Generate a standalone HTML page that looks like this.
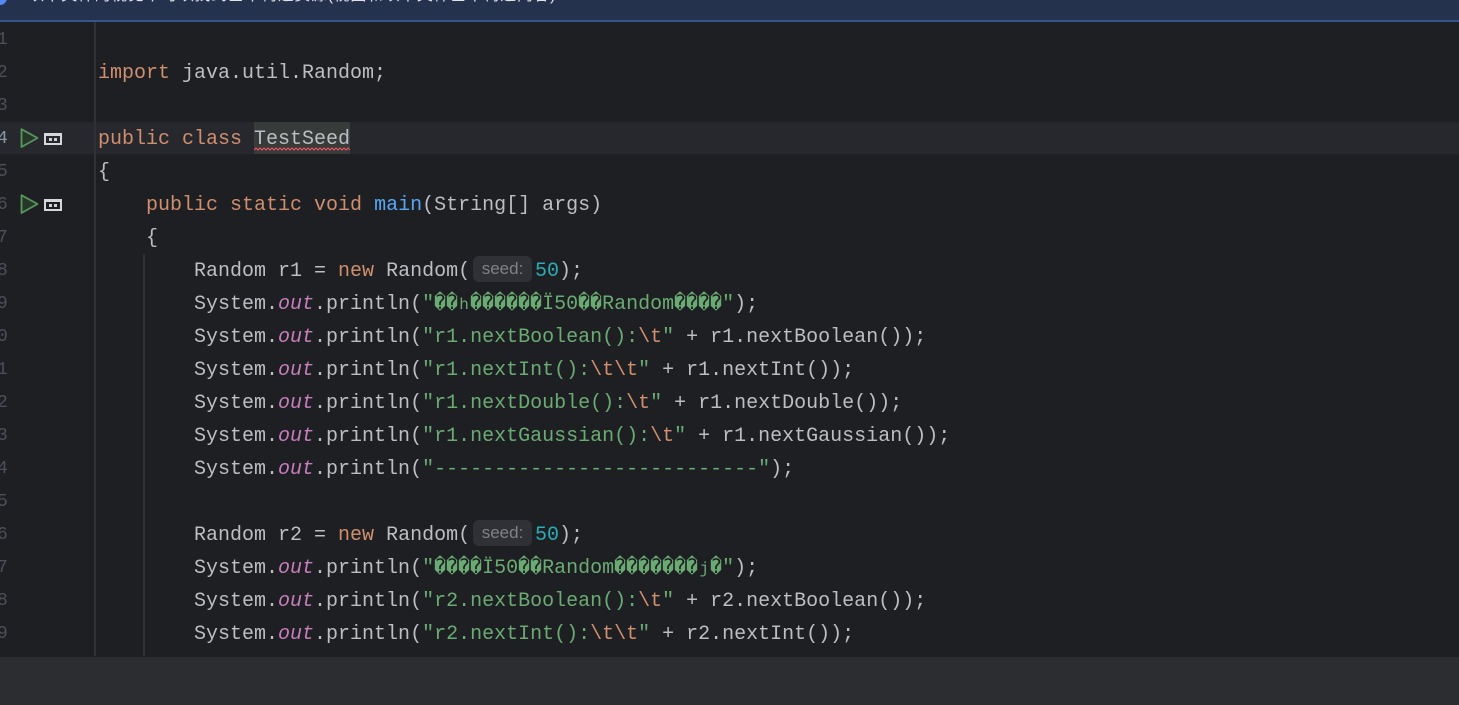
<!DOCTYPE html>
<html><head><meta charset="utf-8">
<style>
html,body{margin:0;padding:0;background:#1e1f22;}
#p{position:relative;width:1459px;height:705px;overflow:hidden;background:#1e1f22;font-family:"Liberation Mono",monospace;font-size:20px;color:#bcbec4;}
.l{position:absolute;left:98px;height:33px;line-height:33px;white-space:pre;letter-spacing:0;margin-top:1px;}
.n{position:absolute;left:-3px;width:12px;height:33px;line-height:33px;font-size:18px;color:#4b5059;margin-top:1px;}
.k{color:#cf8e6d}.s{color:#6aab73}.o{color:#c77dbb;font-style:italic}.m{color:#56a8f5}.c{color:#2aacb8}
.d{display:inline-block;width:12px;line-height:16px;text-align:center;color:#6aab73;font-family:"DejaVu Sans Mono",monospace;}
.t{font-size:16px;line-height:16px;display:inline-block;width:12px;text-align:center}
.h{position:absolute;height:26px;line-height:26px;width:59px;background:#2f3136;border-radius:6px;color:#7f8288;font-family:"Liberation Sans",sans-serif;font-size:17px;text-align:center;left:473px;}
</style></head><body><div id="p">
<div style="position:absolute;left:0;top:0;width:1459px;height:20px;background:#25324d;overflow:hidden">
<div style="position:absolute;left:-7px;top:-9px;width:14px;height:14px;border-radius:50%;background:#548af7"></div>
<div style="position:absolute;left:28px;top:-14px;font:16px/20px 'Liberation Sans','Noto Sans CJK SC',sans-serif;letter-spacing:.65px;color:#dfe1e5;white-space:pre">以下文件的视觉不可以找到基本构造资源(视图和以下文件基本构造内容)</div>
</div>
<div style="position:absolute;left:0;top:20px;width:1459px;height:2px;background:#35538f"></div>
<div style="position:absolute;left:0;top:122px;width:1459px;height:32px;background:#26282e"></div>
<div style="position:absolute;left:254px;top:122px;width:96px;height:32px;background:#373b39"></div>
<div style="position:absolute;left:94px;top:22px;width:2px;height:634px;background:#2f3135"></div>
<div style="position:absolute;left:143px;top:254px;width:2px;height:402px;background:#2f3135"></div>
<div style="position:absolute;left:0;top:657px;width:1459px;height:48px;background:#2b2d30"></div>

<div class="n" style="top:23px">1</div><div class="n" style="top:56px">2</div><div class="n" style="top:89px">3</div><div class="n" style="top:122px;color:#8b94a3">4</div><div class="n" style="top:155px">5</div><div class="n" style="top:188px">6</div><div class="n" style="top:221px">7</div><div class="n" style="top:254px">8</div><div class="n" style="top:287px">9</div><div class="n" style="top:320px">0</div><div class="n" style="top:353px">1</div><div class="n" style="top:386px">2</div><div class="n" style="top:419px">3</div><div class="n" style="top:452px">4</div><div class="n" style="top:485px">5</div><div class="n" style="top:518px">6</div><div class="n" style="top:551px">7</div><div class="n" style="top:584px">8</div><div class="n" style="top:617px">9</div>

<svg style="position:absolute;left:20px;top:128px" width="44" height="21" viewBox="0 0 44 21"><path d="M1.5 1.2 L17.5 10 L1.5 19 Z" fill="#253828" stroke="#57965c" stroke-width="1.8" stroke-linejoin="round"/><rect x="24" y="5" width="18" height="12" fill="#d5d7dc"/><rect x="26" y="8" width="14" height="7" fill="#26282e"/><rect x="29" y="10" width="3" height="3" fill="#ced0d6"/><rect x="34" y="10" width="3" height="3" fill="#ced0d6"/></svg>
<svg style="position:absolute;left:20px;top:194px" width="44" height="21" viewBox="0 0 44 21"><path d="M1.5 1.2 L17.5 10 L1.5 19 Z" fill="#253828" stroke="#57965c" stroke-width="1.8" stroke-linejoin="round"/><rect x="24" y="5" width="18" height="12" fill="#d5d7dc"/><rect x="26" y="8" width="14" height="7" fill="#1e1f22"/><rect x="29" y="10" width="3" height="3" fill="#ced0d6"/><rect x="34" y="10" width="3" height="3" fill="#ced0d6"/></svg>

<div class="l" style="top:56px"><span class="k">import</span> java.util.Random;</div>
<div class="l" style="top:122px"><span class="k">public class</span> TestSeed</div>
<svg style="position:absolute;left:254px;top:147px" width="96" height="5" viewBox="0 0 96 5"><path d="M0 3 L2 1 L4 3 L6 1 L8 3 L10 1 L12 3 L14 1 L16 3 L18 1 L20 3 L22 1 L24 3 L26 1 L28 3 L30 1 L32 3 L34 1 L36 3 L38 1 L40 3 L42 1 L44 3 L46 1 L48 3 L50 1 L52 3 L54 1 L56 3 L58 1 L60 3 L62 1 L64 3 L66 1 L68 3 L70 1 L72 3 L74 1 L76 3 L78 1 L80 3 L82 1 L84 3 L86 1 L88 3 L90 1 L92 3 L94 1 L96 3" fill="none" stroke="#f75464" stroke-width="1"/></svg>
<div class="l" style="top:155px">{</div>
<div class="l" style="top:188px">    <span class="k">public static void</span> <span class="m">main</span>(String[] args)</div>
<div class="l" style="top:221px">    {</div>
<div class="l" style="top:254px">        Random r1 = <span class="k">new</span> Random(</div>
<div class="h" style="top:256px">seed:</div>
<div class="l c" style="top:254px;left:535px">50<span style="color:#bcbec4">);</span></div>
<div class="l" style="top:287px">        System.<span class="o">out</span>.println(<span class="s">"<span class="d">�</span><span class="d">�</span><span class="t">h</span><span class="d">�</span><span class="d">�</span><span class="d">�</span><span class="d">�</span><span class="d">�</span><span class="d">�</span>Ï50<span class="d">�</span><span class="d">�</span>Random<span class="d">�</span><span class="d">�</span><span class="d">�</span><span class="d">�</span>"</span>);</div>
<div class="l" style="top:320px">        System.<span class="o">out</span>.println(<span class="s">"r1.nextBoolean():<span class="k">\t</span>"</span> + r1.nextBoolean());</div>
<div class="l" style="top:353px">        System.<span class="o">out</span>.println(<span class="s">"r1.nextInt():<span class="k">\t\t</span>"</span> + r1.nextInt());</div>
<div class="l" style="top:386px">        System.<span class="o">out</span>.println(<span class="s">"r1.nextDouble():<span class="k">\t</span>"</span> + r1.nextDouble());</div>
<div class="l" style="top:419px">        System.<span class="o">out</span>.println(<span class="s">"r1.nextGaussian():<span class="k">\t</span>"</span> + r1.nextGaussian());</div>
<div class="l" style="top:452px">        System.<span class="o">out</span>.println(<span class="s">"---------------------------"</span>);</div>
<div class="l" style="top:518px">        Random r2 = <span class="k">new</span> Random(</div>
<div class="h" style="top:520px">seed:</div>
<div class="l c" style="top:518px;left:535px">50<span style="color:#bcbec4">);</span></div>
<div class="l" style="top:551px">        System.<span class="o">out</span>.println(<span class="s">"<span class="d">�</span><span class="d">�</span><span class="d">�</span><span class="d">�</span>Ï50<span class="d">�</span><span class="d">�</span>Random<span class="d">�</span><span class="d">�</span><span class="d">�</span><span class="d">�</span><span class="d">�</span><span class="d">�</span><span class="d">�</span><span class="t">j</span><span class="d">�</span>"</span>);</div>
<div class="l" style="top:584px">        System.<span class="o">out</span>.println(<span class="s">"r2.nextBoolean():<span class="k">\t</span>"</span> + r2.nextBoolean());</div>
<div class="l" style="top:617px">        System.<span class="o">out</span>.println(<span class="s">"r2.nextInt():<span class="k">\t\t</span>"</span> + r2.nextInt());</div>
</div></body></html>
